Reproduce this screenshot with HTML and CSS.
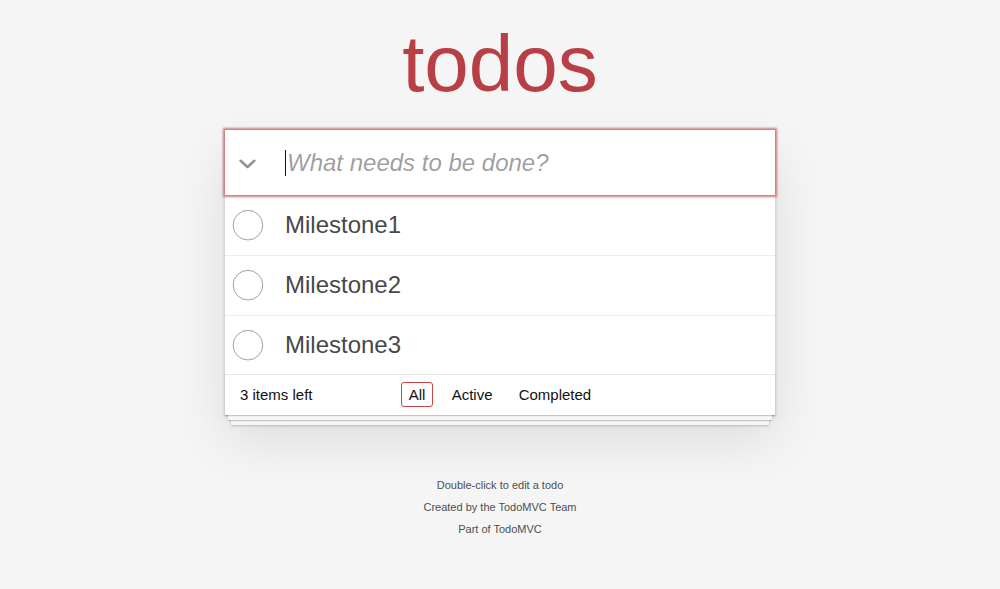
FILE: index.html
```html
<!DOCTYPE html>
<html lang="en">
<head>
<meta charset="utf-8">
<title>todos</title>
<link rel="stylesheet" href="styles.css">
</head>
<body>
<div class="page">
  <h1 class="title">todos</h1>
  <section class="todoapp">
    <div class="new-row">
      <label class="toggle-all" for="new-todo">
        <svg class="chevron" width="17" height="10" viewBox="0 0 17 10"><polyline points="1.6,1.8 8.5,8 15.4,1.8" fill="none" stroke="#949494" stroke-width="2.6" stroke-linecap="round" stroke-linejoin="round"/></svg>
      </label>
      <span class="caret"></span>
      <input id="new-todo" class="new-todo" placeholder="What needs to be done?">
    </div>
    <section class="main">
      <ul class="todo-list">
        <li class="todo">
          <svg class="toggle" width="40" height="40" viewBox="-10 -18 100 135"><circle cx="50" cy="50" r="50" fill="none" stroke="#949494" stroke-width="3"/></svg>
          <label class="todo-label">Milestone1</label>
        </li>
        <li class="todo">
          <svg class="toggle" width="40" height="40" viewBox="-10 -18 100 135"><circle cx="50" cy="50" r="50" fill="none" stroke="#949494" stroke-width="3"/></svg>
          <label class="todo-label">Milestone2</label>
        </li>
        <li class="todo">
          <svg class="toggle" width="40" height="40" viewBox="-10 -18 100 135"><circle cx="50" cy="50" r="50" fill="none" stroke="#949494" stroke-width="3"/></svg>
          <label class="todo-label">Milestone3</label>
        </li>
      </ul>
    </section>
    <footer class="footer">
      <span class="todo-count">3 items left</span>
      <ul class="filters">
        <li><a class="filter selected" href="#/">All</a></li>
        <li><a class="filter" href="#/active">Active</a></li>
        <li><a class="filter" href="#/completed">Completed</a></li>
      </ul>
      <span class="spacer"></span>
    </footer>
  </section>
  <footer class="info">
    <p>Double-click to edit a todo</p>
    <p>Created by <a href="#">the TodoMVC Team</a></p>
    <p>Part of <a href="#">TodoMVC</a></p>
  </footer>
</div>
</body>
</html>
```

FILE: styles.css
```css
html, body {
  margin: 0;
  padding: 0;
}

body {
  font: 14px "Liberation Sans", Arial, sans-serif;
  line-height: 1.4em;
  background: #f5f5f5;
  color: #111111;
}

.page {
  width: 550px;
  margin: 0 auto;
}

.title {
  margin: 0 0 16px;
  padding-top: 14px;
  height: 100px;
  font-size: 80px;
  line-height: 100px;
  font-weight: normal;
  color: #b83f45;
  text-align: center;
}

.todoapp {
  background: #fff;
  margin: 0 0 40px;
  box-shadow: 0 2px 4px 0 rgba(0, 0, 0, 0.2), 0 25px 50px 0 rgba(0, 0, 0, 0.1);
}

.new-row {
  position: relative;
  z-index: 1;
  display: flex;
  align-items: center;
  height: 65px;
  background: #fff;
  box-shadow: 0 0 2px 2px #cf7d7d;
}

.toggle-all {
  width: 45px;
  height: 65px;
  flex: 0 0 45px;
  display: flex;
  align-items: center;
  justify-content: center;
}

.chevron {
  display: block;
  margin-top: 3px;
}

.caret {
  flex: 0 0 1px;
  width: 1px;
  height: 26px;
  margin: 0 0 0 15px;
  background: #111111;
}

.new-todo {
  flex: 1;
  min-width: 0;
  height: 65px;
  margin: 0;
  padding: 0 16px 0 1px;
  border: none;
  outline: none;
  background: transparent;
  font-family: inherit;
  font-size: 24px;
  line-height: 1.4em;
  color: #111111;
}

.new-todo::placeholder {
  font-style: italic;
  font-weight: 400;
  color: rgba(0, 0, 0, 0.4);
}

.main {
  border-top: 1px solid #e6e6e6;
}

.todo-list {
  margin: 0;
  padding: 0;
  list-style: none;
}

.todo {
  display: flex;
  align-items: center;
  font-size: 24px;
  border-bottom: 1px solid #ededed;
}

.todo:last-child {
  border-bottom: none;
}

.toggle {
  display: block;
  flex: 0 0 40px;
}

.todo-label {
  display: block;
  padding: 15px 15px 15px 20px;
  line-height: 1.2;
  font-weight: 400;
  color: #484848;
}

.footer {
  display: grid;
  grid-template-columns: 1fr auto 1fr;
  align-items: center;
  height: 20px;
  padding: 9px 15px 11px;
  border-top: 1px solid #e6e6e6;
  font-size: 15px;
  line-height: 19.6px;
  box-shadow: 0 1px 1px rgba(0, 0, 0, 0.2),
              0 8px 0 -3px #f6f6f6,
              0 9px 1px -3px rgba(0, 0, 0, 0.2),
              0 16px 0 -6px #f6f6f6,
              0 17px 2px -6px rgba(0, 0, 0, 0.2);
}

.todo-count {
  text-align: left;
}

.filters {
  margin: 0;
  padding: 0;
  list-style: none;
  text-align: center;
  white-space: nowrap;
}

.filters li {
  display: inline;
}

.filter {
  color: inherit;
  margin: 3px;
  padding: 3px 7px;
  text-decoration: none;
  border: 1px solid transparent;
  border-radius: 3px;
}

.filter.selected {
  border-color: #ce4646;
}

.info {
  margin: 65px auto 0;
  color: #4d4d4d;
  font-size: 11px;
  text-shadow: 0 1px 0 rgba(255, 255, 255, 0.5);
  text-align: center;
}

.info p {
  line-height: 1;
  margin: 11px 0;
}

.info a {
  color: inherit;
  text-decoration: none;
}
```
